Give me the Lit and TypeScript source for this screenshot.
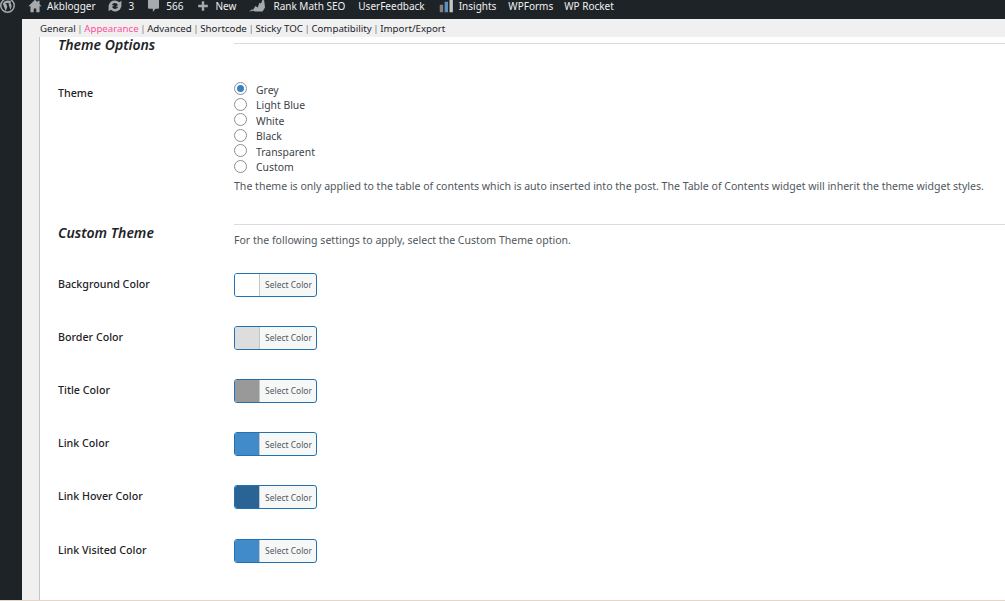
import { LitElement, html, css, svg } from "lit";
import { customElement } from "lit/decorators.js";

const icons = {
  wp: svg`<circle cx="10" cy="10" r="9" fill="none" stroke="#a7aaad" stroke-width="2"/><path d="M3.600 7.200 7.700 17.600l2-5.900-1.500-4.300-1-.1v-.8h5v.8l-1.100.1 2.900 8.600 1-3.200c.5-1.700.6-2.700.1-3.700-.5-1-.9-1.700-.9-2.400 0-.9.6-1.500 1.500-1.600A8 8 0 0 0 3.600 7.200Z" fill="#a7aaad"/>`,
  home: svg`<path d="M10 1 0.500 10.500h3v8.500h4.700v-5.500h3.600v5.500h4.700v-8.500h3L16.500 7.500V2.500h-2.800v2.300Z" fill="#a7aaad"/>`,
  sync: svg`<path d="M10 3a7 7 0 0 1 5.200 2.300L18 3.500V11h-7l2.700-2.300A4.200 4.200 0 0 0 6 9H2.300A7.700 7.700 0 0 1 10 3ZM2 9h7l-2.700 2.300A4.200 4.200 0 0 0 14 11h3.700A7.700 7.700 0 0 1 4.800 14.700L2 16.500Z" fill="#a7aaad"/>`,
  comment: svg`<path d="M3 1h14a1.500 1.500 0 0 1 1.500 1.500v11A1.500 1.500 0 0 1 17 15h-4l-4 5v-5H3a1.500 1.500 0 0 1-1.500-1.500v-11A1.500 1.500 0 0 1 3 1Z" fill="#a7aaad"/>`,
  plus: svg`<path d="M8 2h4v6h6v4h-6v6H8v-6H2V8h6Z" fill="#a7aaad"/>`,
  rank: svg`<path d="M0 17l4-3 1 1 3-5 3 2 2-6 2 1 2-5 2 1 1 9-3 5H8l-3-1Z" fill="#a7aaad"/>`,
  bars: svg`<rect x="1" y="9" width="4.500" height="10" fill="#7d8185"/><rect x="7.500" y="5" width="4.500" height="14" fill="#5d8fb8"/><rect x="14" y="1" width="4.500" height="18" fill="#c2c5c8"/>`,
};

const tabs = ["General", "Appearance", "Advanced", "Shortcode", "Sticky TOC", "Compatibility", "Import/Export"];
const radios = ["Grey", "Light Blue", "White", "Black", "Transparent", "Custom"];
const colors: [string, string][] = [
  ["Background Color", "#ffffff"],
  ["Border Color", "#dddddd"],
  ["Title Color", "#999999"],
  ["Link Color", "#428bca"],
  ["Link Hover Color", "#2a6496"],
  ["Link Visited Color", "#428bca"],
];

@customElement("app-root")
export class AppRoot extends LitElement {
  static styles = css`
    :host { display: block; width: 1005px; height: 601px; overflow: hidden; font-family: "Noto Sans", "Open Sans", sans-serif; font-size: 10.700px; color: #1d2327; background: #fff; }
    .bar { height: 19px; box-sizing: border-box; padding-bottom: 8px; background: #1d2327; color: #f0f0f1; display: flex; align-items: center; font-size: 10px; white-space: nowrap; overflow: hidden; }
    .bar svg { display: block; flex: none; }
    .body { display: flex; height: 581px; border-bottom: 1px solid #e4d6c8; }
    .rail { width: 22px; background: #1d2327; flex: none; }
    .main { flex: 1; min-width: 0; display: flex; flex-direction: column; }
    .tabs { height: 18px; background: #f0f0f1; padding-left: 18px; display: flex; align-items: center; font-size: 9.700px; white-space: nowrap; flex: none; color: #1d2327; }
    .sep { color: #787c82; margin: 0 1.600px; }
    .on { color: #ff4f96; }
    .content { flex: 1; display: flex; min-height: 0; }
    .gutter { width: 17px; background: #f0f0f1; border-right: 1px solid #c3c4c7; flex: none; }
    .form { flex: 1; min-width: 0; background: #fff; padding-left: 18px; display: grid; grid-template-columns: 176px 1fr; grid-auto-rows: max-content; }
    h3 { margin: 0; font-size: 14px; line-height: 16px; font-style: italic; font-weight: 600; color: #1d2327; }
    .rule { border-top: 1px solid #dcdcde; }
    .label { font-weight: 500; line-height: 16px; }
    .h1 { height: 43px; }
    .r1 { height: 6px; margin-top: 6px; }
    .theme-l { padding-top: 5px; }
    .theme-r { height: 142px; margin-top: 2px; }
    .radio { display: flex; align-items: center; height: 15.500px; color: #3c434a; font-size: 10.400px; }
    .dot { width: 13px; height: 13px; border: 1px solid #8c8f94; border-radius: 50%; box-sizing: border-box; flex: none; margin-right: 9px; display: flex; align-items: center; justify-content: center; background: #fff; position: relative; top: -1px; }
    .dot.sel::after { content: ""; width: 7px; height: 7px; border-radius: 50%; background: #3582c4; }
    .desc { color: #50575e; line-height: 16px; margin-top: 3px; font-size: 10.550px; white-space: nowrap; }
    .h2 { margin-top: 1px; }
    .custom-r { border-top: 1px solid #dcdcde; padding-top: 7px; height: 48.600px; box-sizing: border-box; color: #50575e; font-size: 10.550px; line-height: 16px; }
    .row-l { height: 53.200px; padding-top: 3px; box-sizing: border-box; }
    .row-r { height: 53.200px; }
    .pick { width: 83px; height: 24px; box-sizing: border-box; border: 1px solid #2271b1; border-radius: 3px; display: flex; overflow: hidden; background: #f6f7f7; }
    .sw { width: 24px; border-right: 1px solid #c3c4c7; flex: none; }
    .txt { flex: 1; font-size: 8.450px; color: #50575e; display: flex; align-items: center; justify-content: center; padding-left: 1px; white-space: nowrap; }
    .ml14 { margin-left: 13px; }
    .ml13 { margin-left: 12px; }
    .ml11 { margin-left: 11px; }
  `;

  icon(k: keyof typeof icons, w: number, ml: number, mr: number) {
    return html`<svg width=${w} height=${w} viewBox="0 0 20 20" style="margin-left:${ml}px;margin-right:${mr}px">${icons[k]}</svg>`;
  }

  render() {
    return html`
      <div class="bar">
        ${this.icon("wp", 15, 0, 0)}
        ${this.icon("home", 14, 13, 5)}<span>Akblogger</span>
        ${this.icon("sync", 16, 11, 6)}<span>3</span>
        ${this.icon("comment", 13, 13, 6)}<span>566</span>
        ${this.icon("plus", 12, 13, 7)}<span>New</span>
        ${this.icon("rank", 16, 13, 8)}<span>Rank Math SEO</span>
        <span class="ml14">UserFeedback</span>
        ${this.icon("bars", 15, 14, 5)}<span>Insights</span>
        <span class="ml13">WPForms</span>
        <span class="ml11">WP Rocket</span>
      </div>
      <div class="body">
        <div class="rail"></div>
        <div class="main">
          <div class="tabs">
            ${tabs.map((t, i) => html`${i ? html`<span class="sep">|</span>` : ""}<span class=${t === "Appearance" ? "on" : ""}>${t}</span>`)}
          </div>
          <div class="content">
            <div class="gutter"></div>
            <div class="form">
              <h3 class="h1">Theme Options</h3>
              <div class="r1 rule"></div>
              <div class="label theme-l">Theme</div>
              <div class="theme-r">
                ${radios.map((r, i) => html`<div class="radio"><span class="dot ${i === 0 ? "sel" : ""}"></span>${r}</div>`)}
                <div class="desc">The theme is only applied to the table of contents which is auto inserted into the post. The Table of Contents widget will inherit the theme widget styles.</div>
              </div>
              <h3 class="h2">Custom Theme</h3>
              <div class="custom-r">For the following settings to apply, select the Custom Theme option.</div>
              ${colors.map(([l, c]) => html`
                <div class="label row-l">${l}</div>
                <div class="row-r"><div class="pick"><span class="sw" style="background:${c}"></span><span class="txt">Select Color</span></div></div>
              `)}
            </div>
          </div>
        </div>
      </div>
    `;
  }
}
